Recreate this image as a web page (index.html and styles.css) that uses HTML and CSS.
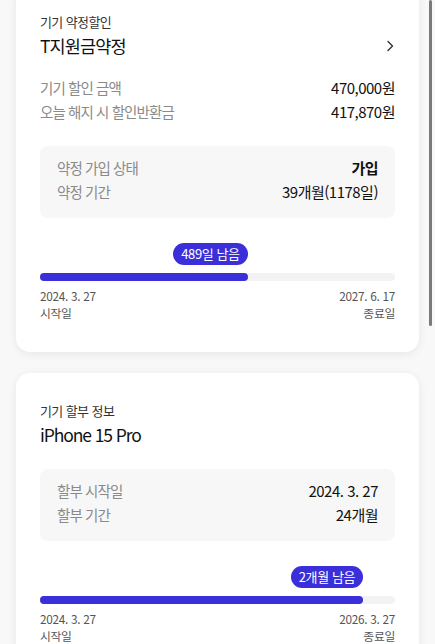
FILE: index.html
```html
<!DOCTYPE html>
<html lang="ko">
<head>
<meta charset="utf-8">
<link rel="stylesheet" href="styles.css">
</head>
<body>
<div class="page">
  <section class="card card-first">
    <div class="label">기기 약정할인</div>
    <div class="title-row">
      <div class="title">T지원금약정</div>
      <svg class="chevron" width="10" height="12" viewBox="0 0 10 12"><path d="M3 1.5 L7.5 6 L3 10.5" fill="none" stroke="#333" stroke-width="1.4" stroke-linecap="round" stroke-linejoin="round"/></svg>
    </div>
    <div class="rows">
      <div class="row"><span class="k">기기 할인 금액</span><span class="v">470,000원</span></div>
      <div class="row"><span class="k">오늘 해지 시 할인반환금</span><span class="v">417,870원</span></div>
    </div>
    <div class="box">
      <div class="row"><span class="k">약정 가입 상태</span><span class="v strong">가입</span></div>
      <div class="row"><span class="k">약정 기간</span><span class="v">39개월(1178일)</span></div>
    </div>
    <div class="progress">
      <div class="badge-track"><div class="badge-wrap" style="width:58.5%"><span class="badge">489일 남음</span></div></div>
      <div class="bar"><div class="fill" style="width:58.5%"></div></div>
      <div class="dates">
        <div class="date"><div>2024. 3. 27</div><div>시작일</div></div>
        <div class="date end"><div>2027. 6. 17</div><div>종료일</div></div>
      </div>
    </div>
  </section>

  <section class="card">
    <div class="label">기기 할부 정보</div>
    <div class="title-row">
      <div class="title latin">iPhone 15 Pro</div>
    </div>
    <div class="box box-tight">
      <div class="row"><span class="k">할부 시작일</span><span class="v">2024. 3. 27</span></div>
      <div class="row"><span class="k">할부 기간</span><span class="v">24개월</span></div>
    </div>
    <div class="progress">
      <div class="badge-track"><div class="badge-wrap" style="width:91%"><span class="badge">2개월 남음</span></div></div>
      <div class="bar"><div class="fill" style="width:91%"></div></div>
      <div class="dates">
        <div class="date"><div>2024. 3. 27</div><div>시작일</div></div>
        <div class="date end"><div>2026. 3. 27</div><div>종료일</div></div>
      </div>
    </div>
  </section>
</div>
<div class="scrollbar"></div>
</body>
</html>
```

FILE: styles.css
```css
* { box-sizing: border-box; }
html, body { margin: 0; padding: 0; }
body {
  background: #f8f8f8;
  font-family: "Noto Sans CJK KR", "Noto Sans", sans-serif;
  color: #111;
  width: 435px;
  height: 644px;
  overflow: hidden;
  position: relative;
}
.page {
  display: flex;
  flex-direction: column;
  gap: 21px;
  padding: 0 16px;
  margin-top: -16px;
}
.card {
  background: #fff;
  border-radius: 14px;
  box-shadow: 0 2px 10px rgba(0,0,0,0.07);
  padding: 29px 24px 31px;
}
.label {
  font-size: 13px;
  line-height: 18px;
  color: #333;
  letter-spacing: -0.6px;
}
.title-row {
  display: flex;
  align-items: center;
  justify-content: space-between;
  margin-top: 2px;
}
.title {
  font-size: 17.5px;
  line-height: 26px;
  font-weight: 400;
  color: #111;
  letter-spacing: -0.9px;
}
.title.latin {
  letter-spacing: -1.1px;
}
.chevron { margin-right: 0; }
.rows {
  margin-top: 17px;
  display: flex;
  flex-direction: column;
}
.row {
  display: flex;
  justify-content: space-between;
  align-items: baseline;
  line-height: 24px;
}
.k {
  color: #8a8a8a;
  font-size: 14.5px;
  letter-spacing: -0.9px;
}
.v {
  color: #111;
  font-size: 15px;
  letter-spacing: -0.5px;
}
.v.strong { font-weight: 700; }
.box {
  margin-top: 22px;
  background: #f7f7f8;
  border-radius: 8px;
  padding: 10px 17px 14px;
}
.box.box-tight { margin-top: 21px; }
.progress {
  margin-top: 25px;
}
.badge-track {
  display: flex;
}
.badge-wrap {
  display: flex;
  justify-content: flex-end;
}
.badge {
  background: #3a2fd8;
  color: #fff;
  font-size: 13px;
  line-height: 22px;
  height: 22px;
  padding: 0 8px;
  border-radius: 11px;
  white-space: nowrap;
  letter-spacing: -0.4px;
}
.bar {
  margin-top: 8px;
  height: 8px;
  border-radius: 4px;
  background: #f3f3f4;
}
.fill {
  height: 8px;
  border-radius: 4px;
  background: #3a2fd8;
}
.dates {
  margin-top: 6px;
  display: flex;
  justify-content: space-between;
  font-size: 11.8px;
  line-height: 17px;
  color: #555;
  letter-spacing: -0.3px;
}
.date.end { text-align: right; }
.scrollbar {
  position: absolute;
  top: 0;
  left: 429px;
  width: 3px;
  height: 326px;
  border-radius: 2px;
  background: #7a7a7a;
}
```
